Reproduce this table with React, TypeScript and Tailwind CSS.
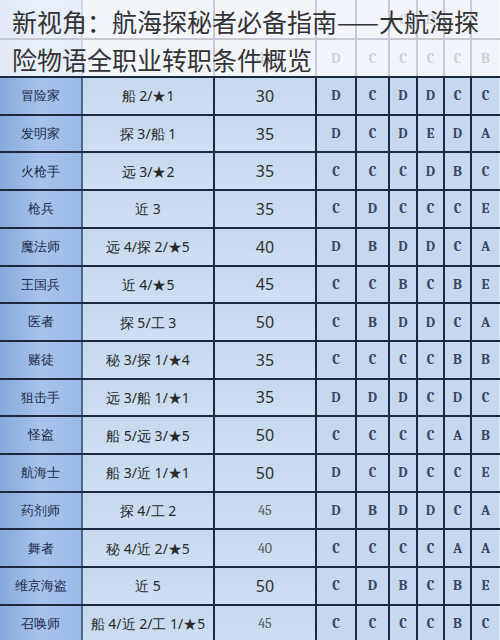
import React from 'react'

interface JobRow {
  name: string
  cond: string
  level: string
  grades: string[]
  faintLevel?: boolean
}

const rows: JobRow[] = [
  { name: '', cond: '', level: '', grades: ['', '', 'C', 'D', '', ''] },
  { name: '', cond: '', level: '45', grades: ['D', 'C', 'C', 'C', 'C', 'B'] },
  { name: '冒险家', cond: '船 2/★1', level: '30', grades: ['D', 'C', 'D', 'D', 'C', 'C'] },
  { name: '发明家', cond: '探 3/船 1', level: '35', grades: ['D', 'C', 'D', 'E', 'D', 'A'] },
  { name: '火枪手', cond: '远 3/★2', level: '35', grades: ['C', 'C', 'C', 'D', 'B', 'C'] },
  { name: '枪兵', cond: '近 3', level: '35', grades: ['C', 'D', 'C', 'C', 'C', 'E'] },
  { name: '魔法师', cond: '远 4/探 2/★5', level: '40', grades: ['D', 'B', 'D', 'D', 'C', 'A'] },
  { name: '王国兵', cond: '近 4/★5', level: '45', grades: ['C', 'C', 'B', 'C', 'B', 'E'] },
  { name: '医者', cond: '探 5/工 3', level: '50', grades: ['C', 'B', 'D', 'D', 'C', 'A'] },
  { name: '赌徒', cond: '秘 3/探 1/★4', level: '35', grades: ['C', 'C', 'C', 'C', 'B', 'B'] },
  { name: '狙击手', cond: '远 3/船 1/★1', level: '35', grades: ['D', 'D', 'D', 'C', 'D', 'C'] },
  { name: '怪盗', cond: '船 5/远 3/★5', level: '50', grades: ['C', 'C', 'C', 'C', 'A', 'B'] },
  { name: '航海士', cond: '船 3/近 1/★1', level: '50', grades: ['D', 'C', 'D', 'C', 'C', 'E'] },
  { name: '药剂师', cond: '探 4/工 2', level: '45', grades: ['D', 'B', 'D', 'D', 'C', 'A'], faintLevel: true },
  { name: '舞者', cond: '秘 4/近 2/★5', level: '40', grades: ['C', 'C', 'C', 'C', 'A', 'A'], faintLevel: true },
  { name: '维京海盗', cond: '近 5', level: '50', grades: ['C', 'D', 'B', 'C', 'B', 'E'] },
  { name: '召唤师', cond: '船 4/近 2/工 1/★5', level: '45', grades: ['C', 'C', 'C', 'C', 'B', 'C'], faintLevel: true },
]

function Row({ row, first }: { row: JobRow; first: boolean }) {
  return (
    <div
      className={`grid grid-cols-[83px_132px_102px_40px_33px_28px_27px_27px_28px] border-b-2 border-[#1d2940] ${
        first ? 'h-[40.3px]' : 'h-[37.71px]'
      }`}
    >
      <div className="flex items-center justify-center border-r-2 border-[#4f6890] bg-gradient-to-r from-[#86a9dc] via-[#a7c3ec] to-[#9abae6] text-[13px] font-medium text-[#1b2a48]">
        {row.name}
      </div>
      <div className="flex items-center justify-center border-r-2 border-[#1d2940] bg-gradient-to-b from-[#c6d8ef] to-[#cfdff3] text-[14px] text-[#2a2a2a]">
        {row.cond}
      </div>
      <div
        className={`flex items-center justify-center border-r-2 border-[#1d2940] bg-gradient-to-b from-[#c6d8ef] to-[#cfdff3] ${
          row.faintLevel ? 'font-serif text-[14px] text-[#555]' : 'text-[16px] text-[#303030]'
        }`}
      >
        {row.level}
      </div>
      {row.grades.map((g, i) => (
        <div
          key={i}
          className={`flex items-center justify-center bg-[#c6d8ef] font-serif text-[14px] font-bold text-[#3a4662] ${
            i < 5 ? 'border-r-2 border-[#1d2940]' : 'border-r border-[#dde6f3]'
          }`}
        >
          {g}
        </div>
      ))}
    </div>
  )
}

export default function App() {
  return (
    <div className="relative h-[640px] w-[500px] overflow-hidden bg-white">
      <div>
        {rows.map((row, i) => (
          <Row key={i} row={row} first={i === 0} />
        ))}
      </div>

      <div className="absolute inset-x-0 top-0 h-[76px] bg-white/75 pl-[12px] pt-[2px] font-['Noto_Sans_CJK_SC',sans-serif] text-[25px] font-normal leading-[38px] text-[#333]">
        新视角：航海探秘者必备指南——大航海探险物语全职业转职条件概览
      </div>
    </div>
  )
}
